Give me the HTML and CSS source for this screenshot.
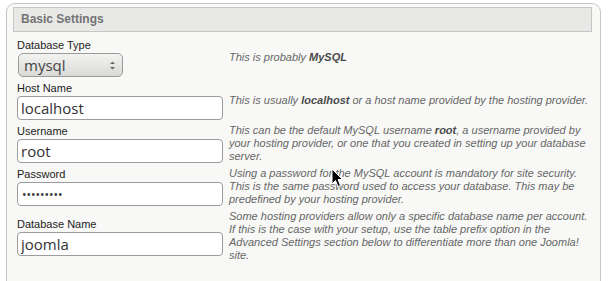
FILE: index.html
```html
<!DOCTYPE html>
<html lang="en">
<head>
    <meta charset="UTF-8">
    <meta name="viewport" content="width=device-width, initial-scale=1.0">
    <title>Joomla! Installation - Database</title>
    <link rel="stylesheet" href="styles.css">
</head>
<body>
    <div class="panel">
        <h3 class="panel-title">Basic Settings</h3>

        <div class="settings">
            <div class="field">
                <label for="db-type">Database Type</label>
                <div class="select-wrap">
                    <select id="db-type">
                        <option value="mysql">mysql</option>
                        <option value="mysqli">mysqli</option>
                    </select>
                    <svg class="select-arrows" width="7" height="11" viewBox="0 0 7 11">
                        <path d="M1 4 L3.5 1.5 L6 4 Z M1 7 L3.5 9.5 L6 7 Z" fill="#666"/>
                    </svg>
                </div>
            </div>
            <p class="hint">This is probably <b>MySQL</b></p>

            <div class="field">
                <label for="db-host">Host Name</label>
                <input type="text" id="db-host" value="localhost">
            </div>
            <p class="hint">This is usually <b>localhost</b> or a host name provided by the hosting provider.</p>

            <div class="field">
                <label for="db-user">Username</label>
                <input type="text" id="db-user" value="root">
            </div>
            <p class="hint">This can be the default MySQL username <b>root</b>, a username provided by your hosting provider, or one that you created in setting up your database server.</p>

            <div class="field">
                <label for="db-pass">Password</label>
                <input type="password" id="db-pass" class="password" value="123456789">
            </div>
            <p class="hint">Using a password for the MySQL account is mandatory for site security. This is the same password used to access your database. This may be predefined by your hosting provider.</p>

            <div class="field">
                <label for="db-name">Database Name</label>
                <input type="text" id="db-name" value="joomla">
            </div>
            <p class="hint">Some hosting providers allow only a specific database name per account. If this is the case with your setup, use the table prefix option in the Advanced Settings section below to differentiate more than one Joomla! site.</p>
        </div>

        <!-- mouse pointer that was in the shot -->
        <svg class="pointer" width="13" height="20" viewBox="0 0 13 20">
            <path d="M1 1 L1 16 L4.5 12.5 L7 18.5 L9.5 17.5 L7 11.5 L11.5 11.5 Z" fill="#000" stroke="#fff" stroke-width="1" stroke-linejoin="round"/>
        </svg>
    </div>
</body>
</html>
```

FILE: styles.css
```css
body { margin: 0; padding: 0; background: #fff; font-family: "Liberation Sans", Arial, sans-serif; }

.panel {
    position: relative;
    width: 579px;
    margin: 3px 0 0 6px;
    padding: 3px 8px 40px 6px;
    border: 1px solid #c6c6c6;
    border-bottom: none;
    border-radius: 9px 9px 0 0;
    background: #f8f9f7;
}

.panel-title {
    margin: 0;
    height: 23px;
    padding: 0 7px;
    line-height: 23px;
    font-size: 12px;
    font-weight: bold;
    color: #737373;
    background: #e8e9e7;
    border: 1px solid #c6c6c6;
}

.settings {
    display: grid;
    grid-template-columns: 206px 360px;
    column-gap: 6px;
    align-items: center;
    margin-top: 4px;
    padding-left: 4px;
}

.field { padding: 2px 0; }
.field label {
    display: block;
    height: 14px;
    line-height: 14px;
    margin-bottom: 1px;
    font-size: 11px;
    color: #222;
}

.field input {
    display: block;
    box-sizing: border-box;
    width: 206px;
    height: 24px;
    margin: 0;
    padding: 0 3px;
    border: 1px solid #9c9c9c;
    border-radius: 4px;
    background: #fff;
    font-family: "Open Sans", sans-serif;
    font-size: 15px;
    color: #333;
    outline: none;
}
.field input.password { font-size: 12px; padding-left: 4px; }

.select-wrap { position: relative; width: 105px; margin-left: 1px; }
.select-wrap select {
    appearance: none;
    -webkit-appearance: none;
    display: block;
    box-sizing: border-box;
    width: 105px;
    height: 24px;
    margin: 0;
    padding: 0 5px;
    border: 1px solid #9a9a9a;
    border-radius: 5px;
    background: linear-gradient(#f3f3f2, #d9d9d7);
    font-family: "Open Sans", sans-serif;
    font-size: 15px;
    color: #444;
}
.select-arrows { position: absolute; right: 7px; top: 7px; pointer-events: none; }

.hint {
    margin: 0;
    padding: 2px 0;
    font-size: 11px;
    line-height: 13px;
    font-style: italic;
    color: #666;
}
.hint b { color: #4a4a4a; }

.pointer { position: absolute; left: 324px; top: 164px; }
```
